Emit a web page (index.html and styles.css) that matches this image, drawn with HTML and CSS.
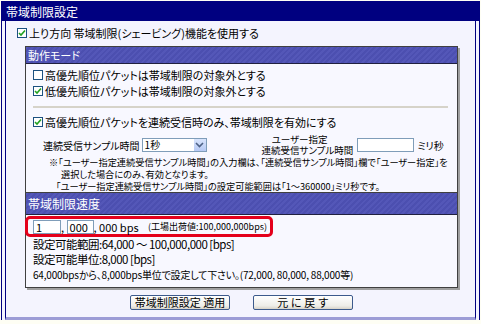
FILE: index.html
```html
<!DOCTYPE html>
<html>
<head>
	<meta charset="utf-8">
	<title>帯域制限設定</title>
	<link rel="stylesheet" href="styles.css">
</head>
<body>
	<div class="panel">
		<div class="panel-title">帯域制限設定</div>
		<div class="panel-body">
			<div class="check-row top-check">
				<span class="cb on"><svg width="8" height="8" viewBox="0 0 8 8"><path d="M1 4l2 2 4-4.5" fill="none" stroke="#21a121" stroke-width="1.6"/></svg></span>上り方向 帯域制限(シェービング)機能を使用する
			</div>
			<div class="box">
				<div class="box-head">動作モード</div>
				<div class="mode">
					<div class="check-row"><span class="cb"></span>高優先順位パケットは帯域制限の対象外とする</div>
					<div class="check-row"><span class="cb on"><svg width="8" height="8" viewBox="0 0 8 8"><path d="M1 4l2 2 4-4.5" fill="none" stroke="#21a121" stroke-width="1.6"/></svg></span>低優先順位パケットは帯域制限の対象外とする</div>
					<div class="rule"></div>
					<div class="check-row"><span class="cb on"><svg width="8" height="8" viewBox="0 0 8 8"><path d="M1 4l2 2 4-4.5" fill="none" stroke="#21a121" stroke-width="1.6"/></svg></span>高優先順位パケットを連続受信時のみ、帯域制限を有効にする</div>
					<div class="sample-row">
						<span class="small">連続受信サンプル時間</span>
						<span class="select">1秒<span class="select-btn"><svg width="9" height="6" viewBox="0 0 9 6"><path d="M1 1l3.5 3.5L8 1" fill="none" stroke="#4d6185" stroke-width="1.6"/></svg></span></span>
						<span class="small user-label"><span class="user-first">ユーザー指定</span><span>連続受信サンプル時間</span></span>
						<span class="textbox wide"></span>
						<span class="small">ミリ秒</span>
					</div>
					<div class="note">
						<div>※「ユーザー指定連続受信サンプル時間」の入力欄は、「連続受信サンプル時間」欄で「ユーザー指定」を</div>
						<div class="note-in">選択した場合にのみ、有効となります。</div>
						<div class="note-in2">「ユーザー指定連続受信サンプル時間」の設定可能範囲は「1～360000」ミリ秒です。</div>
					</div>
				</div>
				<div class="box-head speed-head">帯域制限速度</div>
				<div class="speed">
					<div class="speed-row">
						<span class="textbox w1">1</span>, <span class="textbox w2">000</span>, 000 bps <span class="factory">(工場出荷値:100,000,000bps)</span>
					</div>
					<div class="range">設定可能範囲:64,000 ～ 100,000,000 [bps]</div>
					<div class="range">設定可能単位:8,000 [bps]</div>
					<div class="small range-note">64,000bpsから、8,000bps単位で設定して下さい。(72,000, 80,000, 88,000等)</div>
				</div>
			</div>
			<div class="buttons">
				<button>帯域制限設定 適用</button>
				<button>元 に 戻 す</button>
			</div>
		</div>
	</div>
</body>
</html>
```

FILE: styles.css
```css
*{
	margin: 0;
	padding: 0;
	box-sizing: border-box;
}
body{
	background: #fefef4;
	font-family: "Noto Sans CJK JP", sans-serif;
	font-size: 11px;
	color: #000;
	font-feature-settings: "palt";
}
.panel{
	width: 479px;
	margin: 1px 0 0 1px;
	border: 1px solid #000080;
	border-bottom: 0;
	background: #f4f4fe;
}
.panel-title{
	height: 19px;
	line-height: 19px;
	background: #000080;
	color: #fff;
	padding-left: 4px;
	font-size: 12px;
}
.panel-body{
	margin: 0 3px;
	border: 1px solid #000080;
	border-top: 0;
	border-bottom: 3px solid #9c9cd6;
	padding: 4px 17px 7px 19px;
}
.check-row{
	display: flex;
	align-items: center;
	height: 16px;
	line-height: 16px;
	white-space: nowrap;
}
.top-check{
	margin-left: -8px;
}
.cb{
	width: 10px;
	height: 10px;
	border: 1px solid #1c5180;
	background: #fff;
	margin-right: 2px;
	display: flex;
	align-items: center;
	justify-content: center;
	flex-shrink: 0;
}
.box{
	margin-top: 5px;
	border: 1px solid #404040;
	box-shadow: 2px 2px 0 #a0a0a0;
	background: #f8f8ff;
}
.box-head{
	height: 17px;
	line-height: 16px;
	color: #fff;
	padding-left: 2px;
	background: repeating-linear-gradient(135deg, #5457b8 0 2px, #4c4fb0 2px 4px);
	border-bottom: 1px solid #202040;
}
.speed-head{
	height: 23px;
	line-height: 21px;
	border-top: 1px solid #404040;
	font-size: 12px;
}
.mode{
	padding: 3px 9px 0 7px;
}
.rule{
	height: 2px;
	background: #d6d3c9;
	margin: 7px 0 6px;
}
.sample-row{
	display: flex;
	align-items: center;
	height: 22px;
	margin-top: 4px;
	padding-left: 10px;
	white-space: nowrap;
}
.small{
	font-size: 10px;
}
.select{
	position: relative;
	width: 65px;
	height: 14px;
	margin-left: 2px;
	border: 1px solid #7f9db9;
	background: #fff;
	font-size: 10px;
	line-height: 12px;
	padding-left: 2px;
}
.select-btn{
	position: absolute;
	top: 0;
	right: 0;
	width: 12px;
	height: 12px;
	background: linear-gradient(#d8e4fc, #b6c9f4);
	display: flex;
	align-items: center;
	justify-content: center;
}
.user-label{
	display: flex;
	flex-direction: column;
	font-size: 9.5px;
	line-height: 11px;
	margin-left: 55px;
}
.user-first{
	padding-left: 10px;
}
.textbox{
	display: inline-block;
	height: 14px;
	border: 1px solid #7f9db9;
	background: #fff;
	line-height: 12px;
	padding-left: 2px;
	font-size: 11px;
}
.wide{
	width: 57px;
	margin: 0 3px 0 4px;
}
.note{
	font-size: 9.2px;
	line-height: 12px;
	padding-left: 16px;
	white-space: nowrap;
}
.note-in{
	padding-left: 12px;
}
.note-in2{
	padding-left: 7px;
}
.speed{
	padding: 1px 0 5px 0;
}
.speed-row{
	display: inline-flex;
	align-items: center;
	height: 21px;
	margin-left: -1px;
	padding: 0 3px 0 5px;
	border: 3px solid #e4001b;
	border-radius: 5px;
	white-space: pre;
	font-size: 11px;
}
.w1{
	width: 28px;
}
.w2{
	width: 27px;
}
.factory{
	margin-left: 7px;
	font-size: 9px;
}
.range{
	font-size: 11.5px;
	line-height: 15px;
	padding-left: 7px;
	letter-spacing: -0.5px;
}
.range-note{
	line-height: 14px;
	margin-top: 1px;
	padding-left: 7px;
	letter-spacing: -0.2px;
}
.buttons{
	display: flex;
	justify-content: center;
	gap: 23px;
	margin-top: 7px;
}
.buttons button{
	width: 100px;
	height: 15px;
	font-family: inherit;
	font-size: 11px;
	line-height: 13px;
	border: 1px solid #3c5a8c;
	border-radius: 2px;
	background: linear-gradient(#fff, #eeede8 75%, #d8d3c8);
	color: #000;
}
```
